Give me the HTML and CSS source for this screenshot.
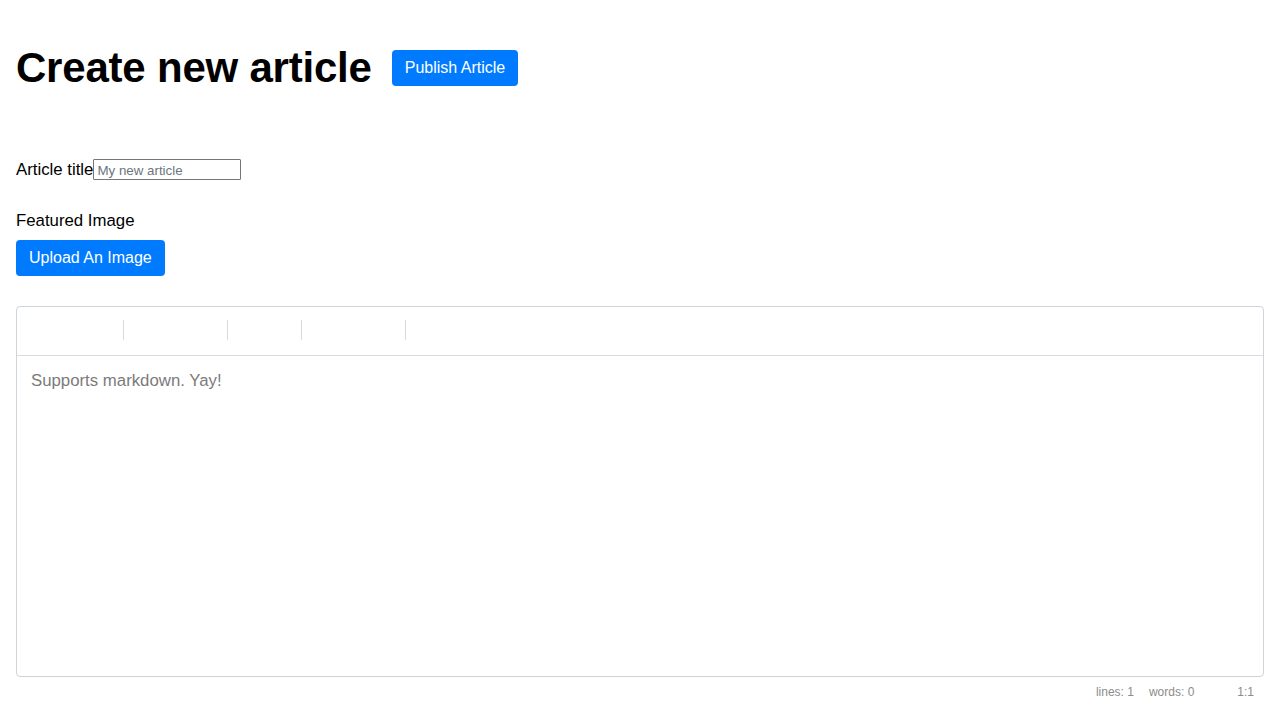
FILE: index.html
```
<!DOCTYPE html>
<html lang="en">
<head>
<meta charset="utf-8">
<title>Create new article</title>
<link rel="stylesheet" href="styles.css">
</head>
<body>
<main class="page">
  <header class="page-header">
    <h1 class="page-title">Create new article</h1>
    <button class="btn" type="button">Publish Article</button>
  </header>
  <div class="field">
    <label class="label" for="title">Article title</label><input class="title-input" id="title" type="text" placeholder="My new article">
  </div>
  <section class="featured">
    <div class="label">Featured Image</div>
    <button class="btn" type="button">Upload An Image</button>
  </section>
  <section class="editor">
    <div class="toolbar">
      <i class="separator separator-first"></i>
      <i class="separator separator-wide"></i>
      <i class="separator separator-narrow"></i>
      <i class="separator separator-wide"></i>
    </div>
    <div class="editor-body">Supports markdown. Yay!</div>
  </section>
  <footer class="statusbar">
    <span class="lines">lines: 1</span>
    <span class="words">words: 0</span>
    <span class="cursor">1:1</span>
  </footer>
</main>
</body>
</html>
```
FILE: styles.css
```
* {
  box-sizing: border-box;
}

body {
  margin: 0;
  background: #fff;
  color: #000;
  font: 16.8px/24px "Liberation Sans", Arial, sans-serif;
}

.page {
  height: 720px;
  padding: 0 16px;
  overflow: hidden;
}

.page-header {
  display: flex;
  align-items: center;
  gap: 20px;
  height: 135px;
}

.page-title {
  margin: 0;
  font-size: 42px;
  line-height: 50px;
  letter-spacing: -0.21px;
}

.btn {
  height: 36px;
  padding: 0 13px;
  border: 0;
  border-radius: 4px;
  background: #007bff;
  color: #fff;
  font: 16px/36px "Liberation Sans", Arial, sans-serif;
  white-space: nowrap;
}

.field {
  display: flex;
  align-items: center;
  height: 21px;
  margin-top: 24px;
}

.title-input {
  width: 148px;
  height: 21px;
  padding: 2px 2px 0 3px;
  border: 1px solid #767676;
  border-radius: 1px;
  font: 13.333px "Liberation Sans", Arial, sans-serif;
}

.title-input::placeholder {
  color: #6c757d;
}

.featured {
  height: 67px;
  margin-top: 29px;
}

.featured .btn {
  display: block;
  margin-top: 7px;
}

.editor {
  height: 371px;
  margin-top: 30px;
  border: 1px solid #ced4da;
  border-radius: 4px;
}

.toolbar {
  display: flex;
  align-items: center;
  height: 49px;
  padding-bottom: 2px;
  border-bottom: 1px solid #d9dbdf;
}

.separator {
  width: 1px;
  height: 20px;
  background: #d9d9d9;
}

.separator-first {
  margin-left: 106px;
}

.separator-wide {
  margin-left: 103px;
}

.separator-narrow {
  margin-left: 73px;
}

.editor-body {
  padding: 13px 14px;
  color: #7b7b7b;
}

.statusbar {
  display: flex;
  justify-content: flex-end;
  height: 30px;
  padding-right: 10px;
  color: #8c8d8b;
  font-size: 12px;
  line-height: 30px;
}

.words {
  margin-left: 15px;
}

.cursor {
  margin-left: 43px;
}
```
